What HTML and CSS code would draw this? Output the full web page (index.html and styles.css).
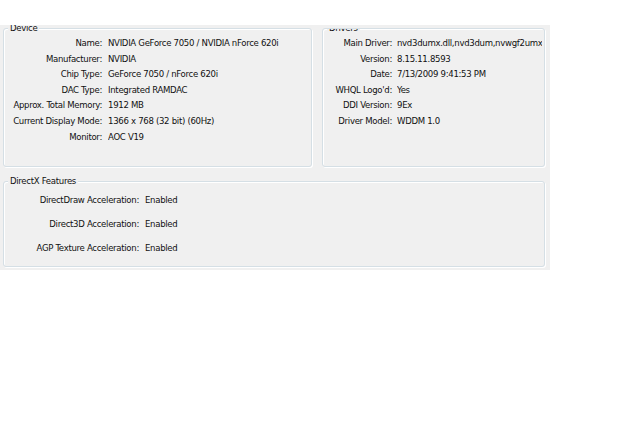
FILE: index.html
```html
<!DOCTYPE html>
<html>
<head>
<meta charset="utf-8">
<link rel="stylesheet" href="styles.css">
</head>
<body>
<div class="panel">
  <div class="top-row">
    <div class="group device">
      <div class="legend">Device</div>
      <div class="rows">
        <div class="lbl">Name:</div><div class="val">NVIDIA GeForce 7050 / NVIDIA nForce 620i</div>
        <div class="lbl">Manufacturer:</div><div class="val">NVIDIA</div>
        <div class="lbl">Chip Type:</div><div class="val">GeForce 7050 / nForce 620i</div>
        <div class="lbl">DAC Type:</div><div class="val">Integrated RAMDAC</div>
        <div class="lbl">Approx. Total Memory:</div><div class="val">1912 MB</div>
        <div class="lbl">Current Display Mode:</div><div class="val">1366 x 768 (32 bit) (60Hz)</div>
        <div class="lbl">Monitor:</div><div class="val">AOC V19</div>
      </div>
    </div>
    <div class="group drivers">
      <div class="legend">Drivers</div>
      <div class="rows">
        <div class="lbl">Main Driver:</div><div class="val">nvd3dumx.dll,nvd3dum,nvwgf2umx.dll,nvwgf2um</div>
        <div class="lbl">Version:</div><div class="val">8.15.11.8593</div>
        <div class="lbl">Date:</div><div class="val">7/13/2009 9:41:53 PM</div>
        <div class="lbl">WHQL Logo'd:</div><div class="val">Yes</div>
        <div class="lbl">DDI Version:</div><div class="val">9Ex</div>
        <div class="lbl">Driver Model:</div><div class="val">WDDM 1.0</div>
      </div>
    </div>
  </div>
  <div class="group features">
    <div class="legend">DirectX Features</div>
    <div class="rows">
      <div class="lbl">DirectDraw Acceleration:</div><div class="val">Enabled</div>
      <div class="lbl">Direct3D Acceleration:</div><div class="val">Enabled</div>
      <div class="lbl">AGP Texture Acceleration:</div><div class="val">Enabled</div>
    </div>
  </div>
</div>
</body>
</html>
```
FILE: styles.css
```css
html, body {
  margin: 0;
  padding: 0;
  background: #ffffff;
}
body {
  font-family: "DejaVu Sans", "Liberation Sans", sans-serif;
  font-stretch: condensed;
  font-size: 9.5px;
  letter-spacing: -0.3px;
  color: #111111;
}
.panel {
  margin-top: 25px;
  width: 550px;
  height: 245px;
  box-sizing: border-box;
  background: #f0f0f0;
  padding: 3px 5px 3px 3px;
  overflow: hidden;
  display: flex;
  flex-direction: column;
  gap: 14px;
}
.top-row {
  display: flex;
  gap: 10px;
}
.group {
  position: relative;
  box-sizing: border-box;
  border: 1px solid #d5dfe5;
  border-radius: 3px;
  box-shadow: inset 1px 1px 0 #ffffff, 1px 1px 0 #ffffff;
}
.device {
  width: 309px;
  height: 139px;
}
.drivers {
  width: 223px;
  height: 139px;
  overflow: hidden;
}
.features {
  width: 542px;
  height: 86px;
}
.legend {
  position: absolute;
  left: 4px;
  top: -8px;
  padding: 0 2px;
  background: #f0f0f0;
  line-height: 14px;
  white-space: nowrap;
}
.rows {
  display: grid;
  column-gap: 6px;
  white-space: nowrap;
}
.lbl {
  text-align: right;
}
.val {
  overflow: hidden;
}
.device .rows {
  grid-template-columns: 98px 1fr;
  grid-auto-rows: 15.6px;
  line-height: 15.6px;
  padding-top: 6px;
}
.drivers .rows {
  grid-template-columns: 69px 1fr;
  column-gap: 5px;
  grid-auto-rows: 15.6px;
  line-height: 15.6px;
  padding-top: 6px;
  padding-right: 2px;
}
.features .rows {
  grid-template-columns: 135px 1fr;
  grid-auto-rows: 23.8px;
  line-height: 23.8px;
  padding-top: 6px;
}
```
